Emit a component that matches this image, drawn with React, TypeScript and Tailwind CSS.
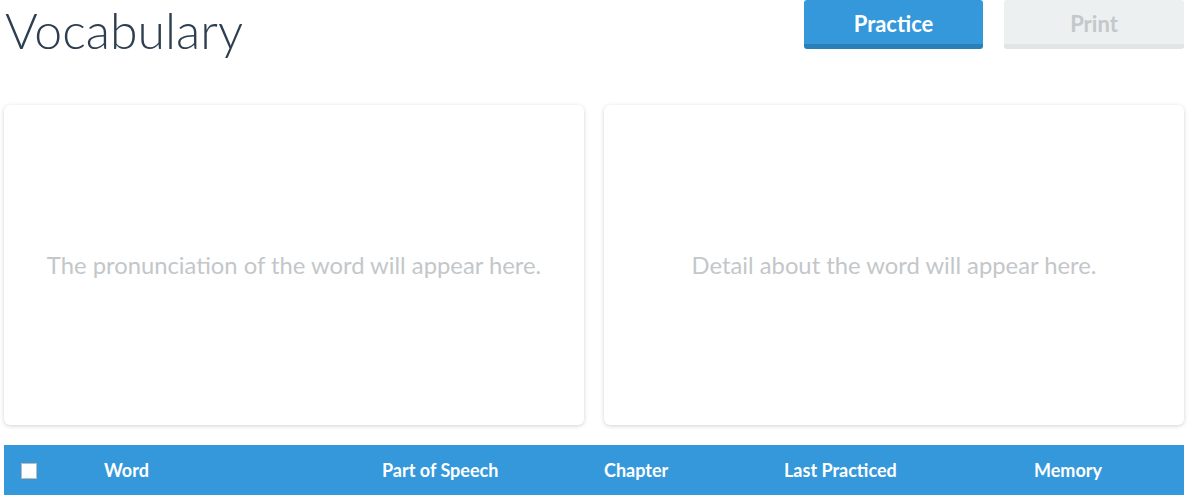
import React from "react";

export default function App() {
  const lato = { fontFamily: "Lato, 'Open Sans', sans-serif" };
  return (
    <div className="w-[1188px] h-[495px] overflow-hidden bg-white px-[4px]" style={lato}>
      <div className="flex items-start justify-between">
        <h1 className="text-[50px] font-light leading-[60px] text-[#2c3e50] pl-[1px] whitespace-nowrap">Vocabulary</h1>
        <div className="flex gap-[21px]">
          <button className="w-[179px] h-[49px] rounded-[3px] bg-[#3498db] border-b-[5px] border-[#2980b9] text-white text-[22px] font-bold leading-none pt-[3px]">
            Practice
          </button>
          <button className="w-[180px] h-[49px] rounded-[3px] bg-[#ecf0f1] border-b-[5px] border-[#e0e5e6] text-[#c2c8cb] text-[22px] font-bold leading-none pt-[3px]">
            Print
          </button>
        </div>
      </div>
      <div className="mt-[45px] flex gap-[20px]">
        <div className="w-[580px] h-[320px] rounded-[6px] bg-white shadow-[0_1px_4px_rgba(0,0,0,0.18)] flex items-center justify-center">
          <span className="text-[23.8px] text-[#c3c7ca] leading-none mt-[2px]">The pronunciation of the word will appear here.</span>
        </div>
        <div className="w-[580px] h-[320px] rounded-[6px] bg-white shadow-[0_1px_4px_rgba(0,0,0,0.18)] flex items-center justify-center">
          <span className="text-[23.8px] text-[#c3c7ca] leading-none mt-[2px]">Detail about the word will appear here.</span>
        </div>
      </div>
      <div className="mt-[20px] h-[52px] bg-[#3498db] flex items-center text-white text-[18px] font-bold pb-[1px]">
        <div className="w-[100px] pl-[17px] flex items-center">
          <span className="w-[16px] h-[16px] bg-white border border-[#bbb] inline-block"></span>
        </div>
        <div className="w-[278px]">Word</div>
        <div className="w-[222px]">Part of Speech</div>
        <div className="w-[180px]">Chapter</div>
        <div className="w-[250px]">Last Practiced</div>
        <div>Memory</div>
      </div>
    </div>
  );
}
